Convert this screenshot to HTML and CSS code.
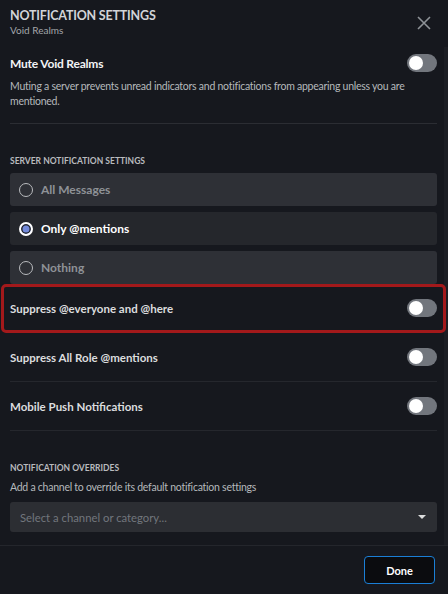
FILE: index.html
```html
<!DOCTYPE html>
<html lang="en">
<head>
    <meta charset="UTF-8">
    <meta name="viewport" content="width=device-width, initial-scale=1.0">
    <title>Notification Settings</title>
    <link rel="stylesheet" href="styles.css">
</head>
<body>
    <div class="modal">
        <header class="modal-header">
            <div>
                <h1 class="title">NOTIFICATION SETTINGS</h1>
                <div class="subtitle">Void Realms</div>
            </div>
            <button class="close" aria-label="Close">
                <svg width="14" height="14" viewBox="0 0 14 14">
                    <path d="M1 1 L13 13 M13 1 L1 13" stroke="#8e9297" stroke-width="1.6" fill="none"/>
                </svg>
            </button>
        </header>

        <div class="content">
            <div class="mute">
                <div class="mute-row">
                    <span class="mute-label">Mute Void Realms</span>
                    <span class="toggle"></span>
                </div>
                <p class="note">Muting a server prevents unread indicators and notifications from appearing unless you are mentioned.</p>
            </div>

            <h2 class="section-title">SERVER NOTIFICATION SETTINGS</h2>
            <div class="options">
                <div class="option"><span class="radio"></span>All Messages</div>
                <div class="option selected"><span class="radio"></span>Only @mentions</div>
                <div class="option"><span class="radio"></span>Nothing</div>
            </div>

            <div class="switch-row highlight">
                <span>Suppress @everyone and @here</span>
                <span class="toggle"></span>
            </div>
            <div class="switch-row">
                <span>Suppress All Role @mentions</span>
                <span class="toggle"></span>
            </div>
            <div class="switch-row">
                <span>Mobile Push Notifications</span>
                <span class="toggle"></span>
            </div>

            <h2 class="section-title overrides">NOTIFICATION OVERRIDES</h2>
            <p class="hint">Add a channel to override its default notification settings</p>
            <div class="select">
                <span>Select a channel or category...</span>
                <svg width="8" height="4" viewBox="0 0 8 4"><path d="M0 0 L8 0 L4 4 Z" fill="#dcddde"/></svg>
            </div>
        </div>

        <footer class="modal-footer">
            <button class="done">Done</button>
        </footer>
    </div>
</body>
</html>
```

FILE: styles.css
```css
* {
    box-sizing: border-box;
}

body {
    margin: 0;
    background-color: #16181e;
    font-family: Lato, "Noto Sans", sans-serif;
    color: #dcddde;
}

.modal {
    height: 594px;
    display: flex;
    flex-direction: column;
}

.modal-header {
    height: 47px;
    padding: 8px 17px 0 10px;
    display: flex;
    justify-content: space-between;
    align-items: flex-start;
}

.title {
    margin: 0;
    font-size: 12.5px;
    line-height: 16px;
    letter-spacing: -0.2px;
    font-weight: 700;
    color: #d2d4d8;
}

.subtitle {
    font-size: 10px;
    line-height: 12px;
    color: #a3a6aa;
}

.close {
    margin-top: 8px;
    padding: 0;
    border: none;
    background: none;
    line-height: 0;
}

.content {
    flex: 1;
    padding: 7px 7px 0 10px;
    border-right: 4px solid #1c1e24;
}

.mute-row,
.switch-row {
    display: flex;
    justify-content: space-between;
    align-items: center;
}

.mute-label {
    font-size: 12px;
    letter-spacing: -0.2px;
    font-weight: 700;
    color: #f2f3f5;
}

.note {
    margin: 7px 0 0;
    padding-bottom: 14px;
    border-bottom: 1px solid #2b2d33;
    font-size: 10.5px;
    line-height: 15px;
    letter-spacing: -0.25px;
    color: #b5b8bc;
}

.toggle {
    position: relative;
    width: 30px;
    height: 18px;
    border-radius: 9px;
    background-color: #72767d;
}

.toggle::after {
    content: "";
    position: absolute;
    left: 2px;
    top: 2px;
    width: 14px;
    height: 14px;
    border-radius: 50%;
    background-color: #fff;
}

.section-title {
    margin: 31px 0 6px;
    font-size: 8.5px;
    line-height: 12px;
    font-weight: 700;
    color: #b9bbbe;
}

.options {
    display: flex;
    flex-direction: column;
    gap: 6px;
}

.option {
    height: 33px;
    padding-left: 9px;
    display: flex;
    align-items: center;
    gap: 8px;
    border-radius: 3px;
    background-color: #2e3036;
    font-size: 12px;
    font-weight: 700;
    color: #8e9297;
}

.option.selected {
    background-color: #25272c;
    color: #fff;
}

.radio {
    width: 14px;
    height: 14px;
    border-radius: 50%;
    border: 1.5px solid #b9bbbe;
}

.option.selected .radio {
    border: 2px solid #fff;
    background-color: #7289da;
    box-shadow: inset 0 0 0 1.5px #25272c;
}

.switch-row {
    position: relative;
    height: 49px;
    border-bottom: 1px solid #25272d;
    font-size: 11.5px;
    font-weight: 700;
    color: #dcddde;
}

.highlight::after {
    content: "";
    position: absolute;
    left: -9px;
    right: -9px;
    top: 0;
    bottom: -1px;
    border: 3px solid #a3191b;
    border-radius: 5px;
}

.overrides {
    margin-top: 31px;
    margin-bottom: 6px;
}

.hint {
    margin: 0 0 8px;
    font-size: 10.5px;
    line-height: 14px;
    letter-spacing: -0.25px;
    color: #b5b8bc;
}

.select {
    height: 30px;
    padding: 0 11px 0 10px;
    display: flex;
    justify-content: space-between;
    align-items: center;
    border-radius: 3px;
    background-color: #2c2e33;
    font-size: 11.3px;
    color: #72767d;
}

.modal-footer {
    height: 49px;
    padding: 0 13px;
    display: flex;
    justify-content: flex-end;
    align-items: center;
    border-top: 1px solid #24262c;
}

.done {
    width: 71px;
    height: 28px;
    border: 1px solid #1b7fd6;
    border-radius: 4px;
    background-color: #0b0c0f;
    color: #fff;
    font-family: Lato, "Noto Sans", sans-serif;
    font-size: 11px;
    font-weight: 700;
}
```
